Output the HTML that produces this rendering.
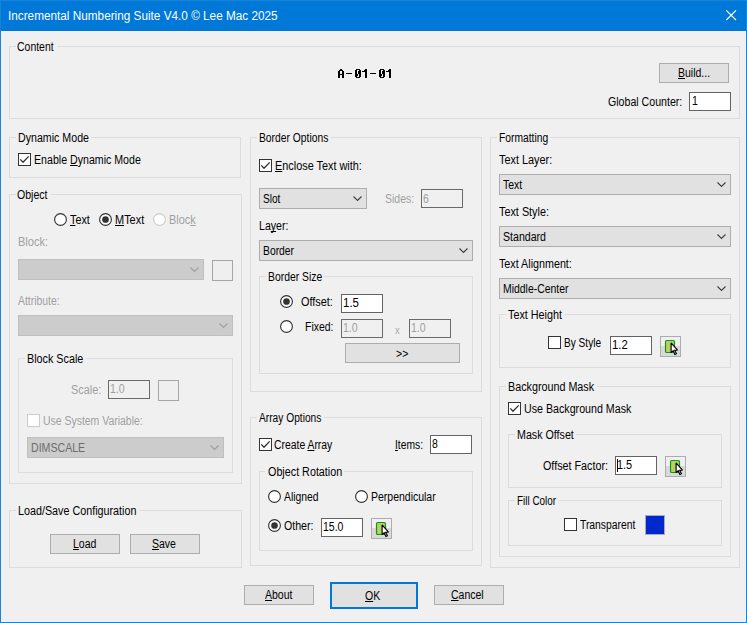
<!DOCTYPE html>
<html><head><meta charset="utf-8"><title>Incremental Numbering Suite</title>
<style>
html,body{margin:0;padding:0}
body{width:747px;height:623px;background:#F0F0F0;position:relative;overflow:hidden;font-family:"Liberation Sans",sans-serif;font-size:12.5px;color:#000}
.a{position:absolute}
.t{position:absolute;white-space:pre;line-height:16px;height:16px;transform-origin:0 0;}
.t u{text-decoration:underline;text-underline-offset:1px;text-decoration-thickness:1px;text-decoration-skip-ink:none}
.g{position:absolute;border:1px solid #DCDCDC;box-sizing:border-box}
.gl{position:absolute;background:#F0F0F0;height:14px}
.btn{position:absolute;box-sizing:border-box;background:#E1E1E1;border:1px solid #ADADAD}
.ed{position:absolute;box-sizing:border-box;background:#FFFFFF;border:1px solid #646464}
.ed.d{background:#F0F0F0;border-color:#6A6A6A}
.cb{position:absolute;box-sizing:border-box;background:#E1E1E1;border:1px solid #ADADAD}
.cb.d{background:#CCCCCC;border-color:#BFBFBF}
.ck{position:absolute;box-sizing:border-box;width:13px;height:13px;background:#fff;border:1px solid #333333}
.ck.d{border-color:#CCCCCC}
.rd{position:absolute;box-sizing:border-box;width:13px;height:13px;background:#fff;border:1px solid #333333;border-radius:50%}
.rd.d{border-color:#CCCCCC}
.rd.s::after{content:"";position:absolute;left:3px;top:3px;width:5px;height:5px;border-radius:50%;background:#333}
.sq{position:absolute;box-sizing:border-box;background:#EFEFEF;border:1px solid #A6A6A6}
svg{position:absolute;overflow:visible}
</style></head><body>
<div class="a" style="left:0;top:0;width:747px;height:31px;background:#0078D7"></div>
<div class="a" style="left:0;top:0;width:747px;height:1px;background:#1A82D8"></div>
<div class="a" style="left:0;top:0;width:1px;height:623px;background:#1A82D8"></div>
<div class="a" style="left:746px;top:0;width:1px;height:623px;background:#1A82D8"></div>
<div class="a" style="left:0;top:622px;width:747px;height:1px;background:#1A82D8"></div>
<svg style="left:726px;top:10px" width="11" height="11" viewBox="0 0 11 11"><path d="M0.3 0.3 L10 10 M10 0.3 L0.3 10" stroke="#fff" stroke-width="1.15" fill="none"/></svg>
<div class="g" style="left:9px;top:46px;width:731px;height:73px"></div>
<div class="gl" style="left:15.50px;top:39px;width:41.50px"></div>
<div class="g" style="left:9px;top:137px;width:232px;height:41px"></div>
<div class="gl" style="left:16.20px;top:130px;width:75.10px"></div>
<div class="g" style="left:9px;top:194px;width:233px;height:290px"></div>
<div class="gl" style="left:15.50px;top:187px;width:35.50px"></div>
<div class="g" style="left:18px;top:358px;width:215px;height:115px"></div>
<div class="gl" style="left:24.50px;top:351px;width:61.50px"></div>
<div class="g" style="left:9px;top:510px;width:233px;height:58px"></div>
<div class="gl" style="left:16.40px;top:503px;width:122.30px"></div>
<div class="g" style="left:250px;top:137px;width:232px;height:255px"></div>
<div class="gl" style="left:256.75px;top:130px;width:74.25px"></div>
<div class="g" style="left:259px;top:276px;width:214px;height:98px"></div>
<div class="gl" style="left:265.50px;top:269px;width:58.75px"></div>
<div class="g" style="left:250px;top:417px;width:232px;height:149px"></div>
<div class="gl" style="left:256.75px;top:410px;width:67.50px"></div>
<div class="g" style="left:259px;top:471px;width:214px;height:80px"></div>
<div class="gl" style="left:265.00px;top:464px;width:79.25px"></div>
<div class="g" style="left:490px;top:137px;width:250px;height:431px"></div>
<div class="gl" style="left:496.75px;top:130px;width:53.25px"></div>
<div class="g" style="left:499px;top:314px;width:232px;height:54px"></div>
<div class="gl" style="left:505.75px;top:307px;width:59.25px"></div>
<div class="g" style="left:499px;top:386px;width:232px;height:171px"></div>
<div class="gl" style="left:505.50px;top:379px;width:91.25px"></div>
<div class="g" style="left:508px;top:434px;width:214px;height:54px"></div>
<div class="gl" style="left:514.50px;top:427px;width:61.50px"></div>
<div class="g" style="left:508px;top:500px;width:214px;height:46px"></div>
<div class="gl" style="left:514.50px;top:493px;width:44.25px"></div>
<div class="btn" style="left:659px;top:63px;width:70px;height:20px"></div>
<div class="btn" style="left:50px;top:534px;width:70px;height:20px"></div>
<div class="btn" style="left:130px;top:534px;width:70px;height:20px"></div>
<div class="btn" style="left:244px;top:585px;width:70px;height:20px"></div>
<div class="btn" style="left:434px;top:585px;width:70px;height:20px"></div>
<div class="btn" style="left:345px;top:343px;width:115px;height:20px"></div>
<div class="btn" style="left:330px;top:582px;width:88px;height:27px;border:2px solid #0078D7"></div>
<div class="ed" style="left:689px;top:92px;width:42px;height:19px"></div>
<div class="ed d" style="left:108px;top:380px;width:42px;height:19px"></div>
<div class="ed d" style="left:421px;top:189px;width:42px;height:19px"></div>
<div class="ed" style="left:341px;top:294px;width:42px;height:19px"></div>
<div class="ed d" style="left:341px;top:319px;width:42px;height:19px"></div>
<div class="ed d" style="left:409px;top:319px;width:42px;height:19px"></div>
<div class="ed" style="left:430px;top:435px;width:42px;height:19px"></div>
<div class="ed" style="left:321px;top:518px;width:42px;height:19px"></div>
<div class="ed" style="left:610px;top:336px;width:42px;height:19px"></div>
<div class="ed" style="left:615px;top:456px;width:42px;height:19px"></div>
<div class="cb d" style="left:18px;top:259px;width:186px;height:21px"></div>
<svg style="left:190px;top:267px" width="10" height="6" viewBox="0 0 10 6"><path d="M0.5 0.5 L4.5 4.5 L8.5 0.5" stroke="#9E9E9E" stroke-width="1.1" fill="none"/></svg>
<div class="cb d" style="left:18px;top:315px;width:215px;height:21px"></div>
<svg style="left:219px;top:323px" width="10" height="6" viewBox="0 0 10 6"><path d="M0.5 0.5 L4.5 4.5 L8.5 0.5" stroke="#9E9E9E" stroke-width="1.1" fill="none"/></svg>
<div class="cb d" style="left:27px;top:437px;width:197px;height:21px"></div>
<svg style="left:210px;top:445px" width="10" height="6" viewBox="0 0 10 6"><path d="M0.5 0.5 L4.5 4.5 L8.5 0.5" stroke="#9E9E9E" stroke-width="1.1" fill="none"/></svg>
<div class="cb" style="left:259px;top:188px;width:108px;height:21px"></div>
<svg style="left:353px;top:196px" width="10" height="6" viewBox="0 0 10 6"><path d="M0.5 0.5 L4.5 4.5 L8.5 0.5" stroke="#404040" stroke-width="1.1" fill="none"/></svg>
<div class="cb" style="left:259px;top:240px;width:214px;height:21px"></div>
<svg style="left:459px;top:248px" width="10" height="6" viewBox="0 0 10 6"><path d="M0.5 0.5 L4.5 4.5 L8.5 0.5" stroke="#404040" stroke-width="1.1" fill="none"/></svg>
<div class="cb" style="left:499px;top:174px;width:232px;height:21px"></div>
<svg style="left:717px;top:182px" width="10" height="6" viewBox="0 0 10 6"><path d="M0.5 0.5 L4.5 4.5 L8.5 0.5" stroke="#404040" stroke-width="1.1" fill="none"/></svg>
<div class="cb" style="left:499px;top:226px;width:232px;height:21px"></div>
<svg style="left:717px;top:234px" width="10" height="6" viewBox="0 0 10 6"><path d="M0.5 0.5 L4.5 4.5 L8.5 0.5" stroke="#404040" stroke-width="1.1" fill="none"/></svg>
<div class="cb" style="left:499px;top:278px;width:232px;height:21px"></div>
<svg style="left:717px;top:286px" width="10" height="6" viewBox="0 0 10 6"><path d="M0.5 0.5 L4.5 4.5 L8.5 0.5" stroke="#404040" stroke-width="1.1" fill="none"/></svg>
<div class="ck" style="left:18px;top:153px"></div>
<svg style="left:18px;top:153px" width="13" height="13" viewBox="0 0 13 13"><path d="M2.3 6.4 L5 9.3 L10.7 3.4" stroke="#333" stroke-width="1.35" fill="none"/></svg>
<div class="ck d" style="left:27px;top:414px"></div>
<div class="ck" style="left:259px;top:159px"></div>
<svg style="left:259px;top:159px" width="13" height="13" viewBox="0 0 13 13"><path d="M2.3 6.4 L5 9.3 L10.7 3.4" stroke="#333" stroke-width="1.35" fill="none"/></svg>
<div class="ck" style="left:259px;top:438px"></div>
<svg style="left:259px;top:438px" width="13" height="13" viewBox="0 0 13 13"><path d="M2.3 6.4 L5 9.3 L10.7 3.4" stroke="#333" stroke-width="1.35" fill="none"/></svg>
<div class="ck" style="left:548px;top:336px"></div>
<div class="ck" style="left:508px;top:402px"></div>
<svg style="left:508px;top:402px" width="13" height="13" viewBox="0 0 13 13"><path d="M2.3 6.4 L5 9.3 L10.7 3.4" stroke="#333" stroke-width="1.35" fill="none"/></svg>
<div class="ck" style="left:564px;top:518px"></div>
<svg style="left:54px;top:213px" width="13" height="13" viewBox="0 0 13 13"><circle cx="6.5" cy="6.5" r="5.9" fill="#fff" stroke="#333333" stroke-width="1.15"/></svg>
<svg style="left:99px;top:213px" width="13" height="13" viewBox="0 0 13 13"><circle cx="6.5" cy="6.5" r="5.9" fill="#fff" stroke="#333333" stroke-width="1.15"/><circle cx="6.5" cy="6.5" r="3.35" fill="#333"/></svg>
<svg style="left:153px;top:213px" width="13" height="13" viewBox="0 0 13 13"><circle cx="6.5" cy="6.5" r="5.9" fill="#fff" stroke="#CCCCCC" stroke-width="1.15"/></svg>
<svg style="left:280px;top:295px" width="13" height="13" viewBox="0 0 13 13"><circle cx="6.5" cy="6.5" r="5.9" fill="#fff" stroke="#333333" stroke-width="1.15"/><circle cx="6.5" cy="6.5" r="3.35" fill="#333"/></svg>
<svg style="left:280px;top:320px" width="13" height="13" viewBox="0 0 13 13"><circle cx="6.5" cy="6.5" r="5.9" fill="#fff" stroke="#333333" stroke-width="1.15"/></svg>
<svg style="left:268px;top:490px" width="13" height="13" viewBox="0 0 13 13"><circle cx="6.5" cy="6.5" r="5.9" fill="#fff" stroke="#333333" stroke-width="1.15"/></svg>
<svg style="left:355px;top:490px" width="13" height="13" viewBox="0 0 13 13"><circle cx="6.5" cy="6.5" r="5.9" fill="#fff" stroke="#333333" stroke-width="1.15"/></svg>
<svg style="left:268px;top:519px" width="13" height="13" viewBox="0 0 13 13"><circle cx="6.5" cy="6.5" r="5.9" fill="#fff" stroke="#333333" stroke-width="1.15"/><circle cx="6.5" cy="6.5" r="3.35" fill="#333"/></svg>
<div class="sq" style="left:212px;top:260px;width:21px;height:21px"></div>
<div class="sq" style="left:158px;top:380px;width:21px;height:21px"></div>
<div class="a" style="left:371px;top:518px;width:21px;height:21px;box-sizing:border-box;border:1px solid #ADADAD;background:linear-gradient(#F0F0F0 0,#F0F0F0 9px,#D9D9D9 9px,#D9D9D9 100%)"></div>
<svg style="left:371px;top:518px" width="21" height="21" viewBox="0 0 21 21"><rect x="5.5" y="4.5" width="9" height="12" rx="1.3" fill="#B7CF66" stroke="#0C970C" stroke-width="1.15"/><path d="M11.1 6.9 L11.1 16.7 L13.2 14.7 L14.9 18.5 L16.4 17.8 L14.7 14.2 L17.5 14.1 Z" fill="#fff" stroke="#000" stroke-width="1.15" stroke-linejoin="miter" stroke-miterlimit="2"/></svg>
<div class="a" style="left:660px;top:336px;width:21px;height:21px;box-sizing:border-box;border:1px solid #ADADAD;background:linear-gradient(#F0F0F0 0,#F0F0F0 9px,#D9D9D9 9px,#D9D9D9 100%)"></div>
<svg style="left:660px;top:336px" width="21" height="21" viewBox="0 0 21 21"><rect x="5.5" y="4.5" width="9" height="12" rx="1.3" fill="#B7CF66" stroke="#0C970C" stroke-width="1.15"/><path d="M11.1 6.9 L11.1 16.7 L13.2 14.7 L14.9 18.5 L16.4 17.8 L14.7 14.2 L17.5 14.1 Z" fill="#fff" stroke="#000" stroke-width="1.15" stroke-linejoin="miter" stroke-miterlimit="2"/></svg>
<div class="a" style="left:665px;top:456px;width:21px;height:21px;box-sizing:border-box;border:1px solid #ADADAD;background:linear-gradient(#F0F0F0 0,#F0F0F0 9px,#D9D9D9 9px,#D9D9D9 100%)"></div>
<svg style="left:665px;top:456px" width="21" height="21" viewBox="0 0 21 21"><rect x="5.5" y="4.5" width="9" height="12" rx="1.3" fill="#B7CF66" stroke="#0C970C" stroke-width="1.15"/><path d="M11.1 6.9 L11.1 16.7 L13.2 14.7 L14.9 18.5 L16.4 17.8 L14.7 14.2 L17.5 14.1 Z" fill="#fff" stroke="#000" stroke-width="1.15" stroke-linejoin="miter" stroke-miterlimit="2"/></svg>
<div class="a" style="left:645px;top:515px;width:20px;height:20px;box-sizing:border-box;border:1px solid #ADADAD;background:#0028CD"></div>
<div class="a" style="left:617px;top:459px;width:1px;height:13px;background:#000"></div>
<span class="t" style="left:17.00px;top:39.00px;color:#000000;transform:scaleX(0.8372)">Content</span>
<span class="t" style="left:18.00px;top:130.00px;color:#000000;transform:scaleX(0.8514)">Dynamic Mode</span>
<span class="t" style="left:34.00px;top:152.00px;color:#000000;transform:scaleX(0.8491)">Enable <u>D</u>ynamic Mode</span>
<span class="t" style="left:17.00px;top:187.00px;color:#000000;transform:scaleX(0.8451)">Object</span>
<span class="t" style="left:70.00px;top:212.00px;color:#000000;transform:scaleX(0.8667)"><u>T</u>ext</span>
<span class="t" style="left:115.00px;top:212.00px;color:#000000;transform:scaleX(0.8760)"><u>M</u>Text</span>
<span class="t" style="left:169.00px;top:212.00px;color:#A0A0A0;transform:scaleX(0.8729)">Bloc<u>k</u></span>
<span class="t" style="left:18.00px;top:234.00px;color:#A0A0A0;transform:scaleX(0.8828)">Block:</span>
<span class="t" style="left:18.00px;top:293.00px;color:#A0A0A0;transform:scaleX(0.8316)">Attribute:</span>
<span class="t" style="left:27.00px;top:351.00px;color:#000000;transform:scaleX(0.8627)">Block Scale</span>
<span class="t" style="left:71.00px;top:382.00px;color:#A0A0A0;transform:scaleX(0.8702)">Scale:</span>
<span class="t" style="left:110.00px;top:381.00px;color:#A0A0A0;transform:scaleX(0.8438)">1.0</span>
<span class="t" style="left:43.00px;top:413.00px;color:#A0A0A0;transform:scaleX(0.8358)">Use System Variable:</span>
<span class="t" style="left:31.00px;top:440.00px;color:#6D6D6D;transform:scaleX(0.8474)">DIMSCALE</span>
<span class="t" style="left:18.00px;top:503.00px;color:#000000;transform:scaleX(0.8604)">Load/Save Configuration</span>
<span class="t" style="left:259.00px;top:130.00px;color:#000000;transform:scaleX(0.8242)">Border Options</span>
<span class="t" style="left:275.00px;top:158.00px;color:#000000;transform:scaleX(0.8696)"><u>E</u>nclose Text with:</span>
<span class="t" style="left:263.00px;top:191.00px;color:#000000;transform:scaleX(0.8072)">Slot</span>
<span class="t" style="left:385.00px;top:191.00px;color:#A0A0A0;transform:scaleX(0.8397)">Sides:</span>
<span class="t" style="left:423.00px;top:191.00px;color:#A0A0A0;transform:scaleX(0.8400)">6</span>
<span class="t" style="left:259.00px;top:218.00px;color:#000000;transform:scaleX(0.8462)">La<u>y</u>er:</span>
<span class="t" style="left:263.00px;top:243.00px;color:#000000;transform:scaleX(0.8276)">Border</span>
<span class="t" style="left:268.00px;top:269.00px;color:#000000;transform:scaleX(0.8314)">Border Size</span>
<span class="t" style="left:301.00px;top:294.00px;color:#000000;transform:scaleX(0.8714)">Offset:</span>
<span class="t" style="left:343.00px;top:295.00px;color:#000000;transform:scaleX(0.9206)">1.5</span>
<span class="t" style="left:305.00px;top:319.00px;color:#000000;transform:scaleX(0.8359)">Fixed:</span>
<span class="t" style="left:343.00px;top:320.00px;color:#A0A0A0;transform:scaleX(0.8438)">1.0</span>
<span class="t" style="left:411.00px;top:320.00px;color:#A0A0A0;transform:scaleX(0.8438)">1.0</span>
<span class="t" style="left:259.00px;top:410.00px;color:#000000;transform:scaleX(0.8158)">Array Options</span>
<span class="t" style="left:274.00px;top:437.00px;color:#000000;transform:scaleX(0.8303)">Create <u>A</u>rray</span>
<span class="t" style="left:395.00px;top:437.00px;color:#000000;transform:scaleX(0.8237)"><u>I</u>tems:</span>
<span class="t" style="left:432.00px;top:436.00px;color:#000000;transform:scaleX(0.8400)">8</span>
<span class="t" style="left:268.00px;top:464.00px;color:#000000;transform:scaleX(0.8614)">Object Rotation</span>
<span class="t" style="left:284.00px;top:489.00px;color:#000000;transform:scaleX(0.8293)">Aligned</span>
<span class="t" style="left:371.00px;top:489.00px;color:#000000;transform:scaleX(0.8388)">Perpendicular</span>
<span class="t" style="left:284.00px;top:518.00px;color:#000000;transform:scaleX(0.8485)">Other:</span>
<span class="t" style="left:323.00px;top:519.00px;color:#000000;transform:scaleX(0.8402)">15.0</span>
<span class="t" style="left:499.00px;top:130.00px;color:#000000;transform:scaleX(0.8233)">Formatting</span>
<span class="t" style="left:499.00px;top:152.00px;color:#000000;transform:scaleX(0.8703)">Text Layer:</span>
<span class="t" style="left:503.00px;top:177.00px;color:#000000;transform:scaleX(0.8391)">Text</span>
<span class="t" style="left:499.00px;top:204.00px;color:#000000;transform:scaleX(0.8667)">Text Style:</span>
<span class="t" style="left:503.00px;top:229.00px;color:#000000;transform:scaleX(0.8477)">Standard</span>
<span class="t" style="left:499.00px;top:256.00px;color:#000000;transform:scaleX(0.8593)">Text Alignment:</span>
<span class="t" style="left:503.00px;top:281.00px;color:#000000;transform:scaleX(0.8350)">Middle-Center</span>
<span class="t" style="left:508.00px;top:307.00px;color:#000000;transform:scaleX(0.8635)">Text Height</span>
<span class="t" style="left:564.00px;top:335.00px;color:#000000;transform:scaleX(0.8079)">By Style</span>
<span class="t" style="left:612.00px;top:337.00px;color:#000000;transform:scaleX(0.9048)">1.2</span>
<span class="t" style="left:508.00px;top:379.00px;color:#000000;transform:scaleX(0.8606)">Background Mask</span>
<span class="t" style="left:524.00px;top:401.00px;color:#000000;transform:scaleX(0.8537)">Use Background Mask</span>
<span class="t" style="left:517.00px;top:427.00px;color:#000000;transform:scaleX(0.8550)">Mask Offset</span>
<span class="t" style="left:543.00px;top:458.00px;color:#000000;transform:scaleX(0.8610)">Offset Factor:</span>
<span class="t" style="left:617.00px;top:457.00px;color:#000000;transform:scaleX(0.8730)">1.5</span>
<span class="t" style="left:517.00px;top:493.00px;color:#000000;transform:scaleX(0.7917)">Fill Color</span>
<span class="t" style="left:580.00px;top:517.00px;color:#000000;transform:scaleX(0.8271)">Transparent</span>
<span class="t" style="left:608.00px;top:94.00px;color:#000000;transform:scaleX(0.8484)">Global Counter:</span>
<span class="t" style="left:692.00px;top:93.00px;color:#000000;transform:scaleX(0.8400)">1</span>
<span class="t" style="left:73.00px;top:536.00px;color:#000000;transform:scaleX(0.8400)"><u>L</u>oad</span>
<span class="t" style="left:152.00px;top:536.00px;color:#000000;transform:scaleX(0.8400)"><u>S</u>ave</span>
<span class="t" style="left:678.00px;top:65.00px;color:#000000;transform:scaleX(0.8400)"><u>B</u>uild...</span>
<span class="t" style="left:265.00px;top:587.00px;color:#000000;transform:scaleX(0.8400)"><u>A</u>bout</span>
<span class="t" style="left:365.00px;top:588.00px;color:#000000;transform:scaleX(0.8400)"><u>O</u>K</span>
<span class="t" style="left:451.00px;top:587.00px;color:#000000;transform:scaleX(0.8400)"><u>C</u>ancel</span>
<span class="t" style="left:396.00px;top:346.00px;color:#000000;transform:scaleX(0.8400)">&gt;&gt;</span>
<span class="t" style="left:395.00px;top:323.00px;font-size:10px;color:#A8A8A8;transform:scaleX(0.9500)">x</span>
<span class="t" style="left:8.00px;top:8.00px;font-size:12px;color:#FFFFFF;transform:scaleX(0.9806)">Incremental Numbering Suite V4.0 © Lee Mac 2025</span>
<svg style="left:0;top:0" width="747" height="100" viewBox="0 0 747 100" shape-rendering="crispEdges" fill="#000"><rect x="340" y="69" width="2" height="1"/><rect x="339" y="70" width="4" height="1"/><rect x="338" y="71" width="2" height="1"/><rect x="342" y="71" width="2" height="1"/><rect x="338" y="72" width="2" height="1"/><rect x="342" y="72" width="2" height="1"/><rect x="338" y="73" width="2" height="1"/><rect x="342" y="73" width="2" height="1"/><rect x="338" y="74" width="6" height="1"/><rect x="338" y="75" width="2" height="1"/><rect x="342" y="75" width="2" height="1"/><rect x="338" y="76" width="2" height="1"/><rect x="342" y="76" width="2" height="1"/><rect x="338" y="77" width="2" height="1"/><rect x="342" y="77" width="2" height="1"/><rect x="346" y="73" width="6" height="1"/><rect x="356" y="69" width="4" height="1"/><rect x="355" y="70" width="2" height="1"/><rect x="359" y="70" width="2" height="1"/><rect x="355" y="71" width="2" height="1"/><rect x="358" y="71" width="3" height="1"/><rect x="355" y="72" width="2" height="1"/><rect x="358" y="72" width="3" height="1"/><rect x="355" y="73" width="2" height="1"/><rect x="358" y="73" width="3" height="1"/><rect x="355" y="74" width="3" height="1"/><rect x="359" y="74" width="2" height="1"/><rect x="355" y="75" width="3" height="1"/><rect x="359" y="75" width="2" height="1"/><rect x="355" y="76" width="2" height="1"/><rect x="359" y="76" width="2" height="1"/><rect x="356" y="77" width="4" height="1"/><rect x="365" y="69" width="2" height="1"/><rect x="364" y="70" width="3" height="1"/><rect x="362" y="71" width="5" height="1"/><rect x="365" y="72" width="2" height="1"/><rect x="365" y="73" width="2" height="1"/><rect x="365" y="74" width="2" height="1"/><rect x="365" y="75" width="2" height="1"/><rect x="365" y="76" width="2" height="1"/><rect x="365" y="77" width="2" height="1"/><rect x="370" y="73" width="6" height="1"/><rect x="380" y="69" width="4" height="1"/><rect x="379" y="70" width="2" height="1"/><rect x="383" y="70" width="2" height="1"/><rect x="379" y="71" width="2" height="1"/><rect x="382" y="71" width="3" height="1"/><rect x="379" y="72" width="2" height="1"/><rect x="382" y="72" width="3" height="1"/><rect x="379" y="73" width="2" height="1"/><rect x="382" y="73" width="3" height="1"/><rect x="379" y="74" width="3" height="1"/><rect x="383" y="74" width="2" height="1"/><rect x="379" y="75" width="3" height="1"/><rect x="383" y="75" width="2" height="1"/><rect x="379" y="76" width="2" height="1"/><rect x="383" y="76" width="2" height="1"/><rect x="380" y="77" width="4" height="1"/><rect x="389" y="69" width="2" height="1"/><rect x="388" y="70" width="3" height="1"/><rect x="386" y="71" width="5" height="1"/><rect x="389" y="72" width="2" height="1"/><rect x="389" y="73" width="2" height="1"/><rect x="389" y="74" width="2" height="1"/><rect x="389" y="75" width="2" height="1"/><rect x="389" y="76" width="2" height="1"/><rect x="389" y="77" width="2" height="1"/></svg>
</body></html>
